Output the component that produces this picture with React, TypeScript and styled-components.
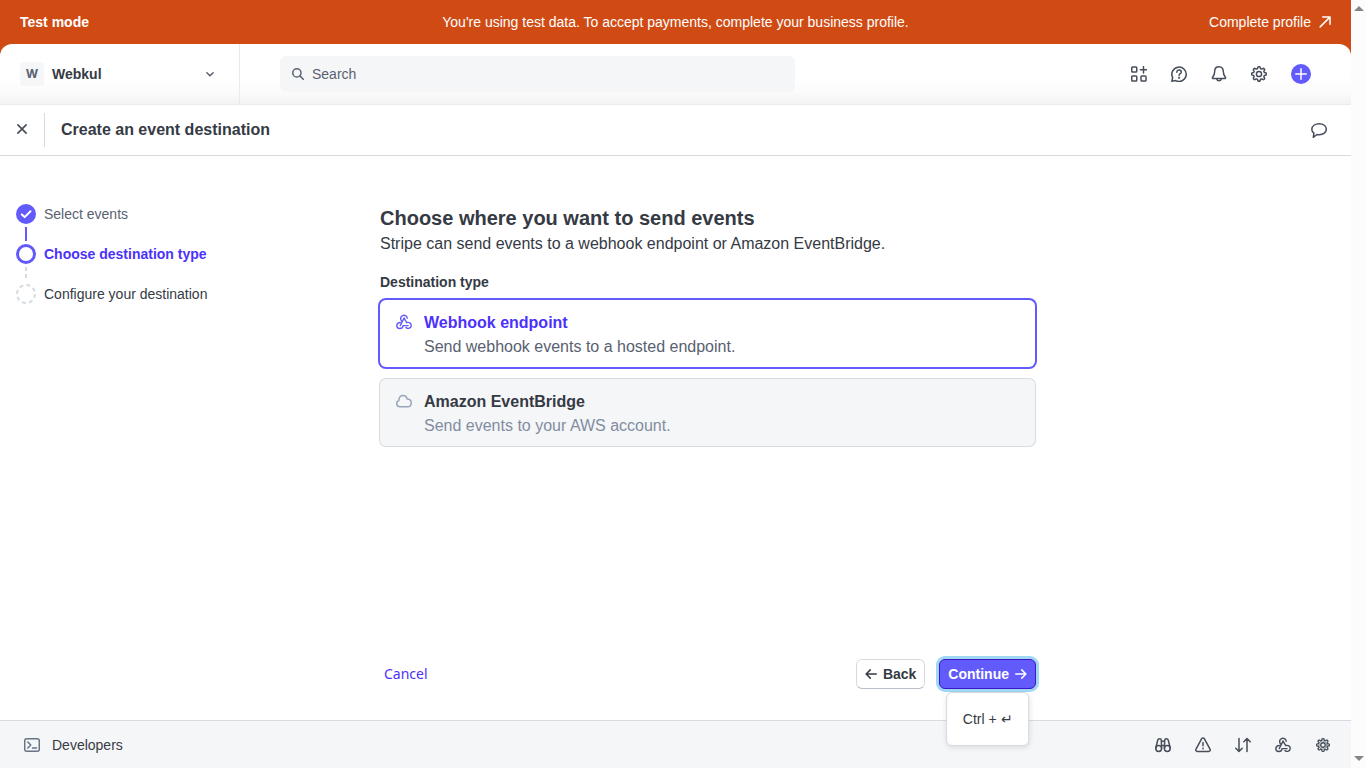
import React, { useState } from "react";
import styled, { createGlobalStyle, css } from "styled-components";

const color = {
  ink: "#353a44",
  icon: "#474e5a",
  muted: "#596171",
  faint: "#818da0",
  brand: "#625afa",
  brandText: "#4b32fa",
  line: "#d5dbe1",
  surface: "#f5f6f8",
  orange: "#d04b14",
};

const GlobalStyle = createGlobalStyle`
  *, *::before, *::after { box-sizing: border-box; }
  body {
    margin: 0;
    background: #fff;
    color: ${color.ink};
    font-family: "Liberation Sans", Arial, sans-serif;
    font-size: 14px;
    line-height: 20px;
  }
  button, input { font: inherit; color: inherit; }
  svg { display: block; flex: none; }
`;

const Frame = styled.div`
  display: grid;
  grid-template-columns: minmax(0, 1fr) 15px;
  min-height: 100vh;
`;

const Page = styled.div`
  display: flex;
  flex-direction: column;
  background: ${color.orange};
`;

const ScrollRail = styled.div`
  display: flex;
  flex-direction: column;
  justify-content: space-between;
  align-items: center;
  padding: 6px 0 7px;
  background: #fcfcfc;
`;

const Banner = styled.div`
  display: grid;
  grid-template-columns: 1fr auto 1fr;
  align-items: center;
  gap: 16px;
  min-height: 44px;
  padding: 0 20px;
  color: #fff;
`;

const ProfileLink = styled.a`
  justify-self: end;
  display: flex;
  align-items: center;
  gap: 8px;
  color: inherit;
  text-decoration: none;
`;

const Header = styled.header`
  display: flex;
  align-items: center;
  height: 60px;
  padding-right: 40px;
  background: linear-gradient(#fff 55%, #fbfbfb 80%, #f3f3f3);
  border-radius: 12px 12px 0 0;
`;

const AccountButton = styled.button`
  display: flex;
  align-items: center;
  gap: 8px;
  width: 240px;
  height: 100%;
  padding: 0 24px 0 20px;
  border: 0;
  border-right: 1px solid #e8ebee;
  background: none;
  font-weight: 700;
  text-align: left;
`;

const AccountName = styled.span`
  flex: 1;
`;

const Avatar = styled.span`
  display: grid;
  place-items: center;
  width: 24px;
  height: 24px;
  border-radius: 4px;
  background: ${color.surface};
  color: ${color.muted};
  font-family: Inter, sans-serif;
  font-size: 12px;
`;

const SearchBox = styled.label`
  display: flex;
  align-items: center;
  gap: 8px;
  flex: 1;
  max-width: 515px;
  height: 36px;
  margin: 0 40px;
  padding: 0 12px;
  border-radius: 6px;
  background: ${color.surface};
  color: ${color.muted};
`;

const SearchInput = styled.input`
  flex: 1;
  min-width: 0;
  padding: 0;
  border: 0;
  outline: 0;
  background: none;
  &::placeholder { color: ${color.muted}; opacity: 1; }
`;

const Tools = styled.div`
  display: flex;
  align-items: center;
  margin-left: auto;
`;

const IconButton = styled.button`
  display: grid;
  place-items: center;
  width: 40px;
  height: 40px;
  padding: 0;
  border: 0;
  background: none;
  color: ${color.icon};
`;

const AddButton = styled.button`
  display: grid;
  place-items: center;
  width: 20px;
  height: 20px;
  margin-left: 12px;
  padding: 0;
  border: 0;
  border-radius: 50%;
  background: ${color.brand};
  color: #fff;
`;

const Sheet = styled.section`
  flex: 1;
  display: flex;
  flex-direction: column;
  background: #fff;
  border-top: 1px solid #ebebec;
`;

const TitleBar = styled.div`
  display: flex;
  align-items: center;
  height: 51px;
  padding: 0 12px 0 0;
  border-bottom: 1px solid ${color.line};
`;

const CloseButton = styled(IconButton)`
  width: 45px;
  height: 34px;
  padding-bottom: 2px;
  border-right: 1px solid ${color.line};
`;

const SheetTitle = styled.h1`
  flex: 1;
  margin: 0 0 0 16px;
  font-size: 16px;
  line-height: 24px;
`;

const Body = styled.div`
  flex: 1;
  display: flex;
`;

const Steps = styled.ol`
  flex: none;
  width: 380px;
  margin: 0;
  padding: 48px 16px;
  list-style: none;
`;

type StepState = "done" | "current" | "todo";

const StepItem = styled.li<{ $state: StepState }>`
  display: flex;
  gap: 8px;
  min-height: 40px;
  color: ${(p) => (p.$state === "done" ? color.muted : p.$state === "current" ? color.brandText : color.ink)};
  font-weight: ${(p) => (p.$state === "current" ? 700 : 400)};
`;

const Marker = styled.span`
  display: flex;
  flex-direction: column;
  align-items: center;
  gap: 3px;
`;

const Main = styled.main`
  flex: 1;
  display: flex;
  flex-direction: column;
  max-width: 656px;
  padding: 48px 0 31px;
`;

const Heading = styled.h2`
  margin: 0;
  font-size: 20px;
  line-height: 28px;
`;

const Lead = styled.p`
  margin: 0 0 16px;
  font-size: 16px;
  line-height: 24px;
`;

const Options = styled.fieldset`
  display: flex;
  flex-direction: column;
  gap: 12px;
  min-width: 0;
  margin: 0;
  padding: 0 1px 0 0;
  border: 0;
`;

const Legend = styled.legend`
  margin-bottom: 8px;
  padding: 0;
  font-weight: 700;
`;

const Option = styled.label<{ $selected: boolean }>`
  display: flex;
  gap: 12px;
  padding: 11px 16px 8px;
  border-radius: 6px;
  font-size: 16px;
  line-height: 24px;
  ${(p) =>
    p.$selected
      ? css`
          color: ${color.muted};
          background: #fff;
          box-shadow: 0 0 0 2px ${color.brand};
        `
      : css`
          color: ${color.faint};
          background: ${color.surface};
          box-shadow: 0 0 0 1px ${color.line};
        `}
`;

const OptionRadio = styled.input`
  position: absolute;
  margin: 0;
  opacity: 0;
`;

const OptionIcon = styled.span<{ $selected: boolean }>`
  padding-top: 3px;
  color: ${(p) => (p.$selected ? color.brand : "#99a5b8")};
`;

const OptionText = styled.span`
  display: flex;
  flex-direction: column;
`;

const OptionTitle = styled.strong<{ $selected: boolean }>`
  color: ${(p) => (p.$selected ? color.brandText : color.ink)};
`;

const Actions = styled.div`
  display: flex;
  align-items: center;
  margin-top: auto;
`;

const CancelButton = styled.button`
  margin-right: auto;
  padding: 4px;
  border: 0;
  background: none;
  color: ${color.brandText};
  font-family: "Noto Sans", sans-serif;
`;

const ActionButton = styled.button<{ $primary?: boolean }>`
  display: flex;
  align-items: center;
  gap: 6px;
  height: 30px;
  padding: 0 8px;
  border-radius: 6px;
  font-weight: 700;
  ${(p) =>
    p.$primary
      ? css`
          border: 1px solid #3a17c4;
          background: ${color.brand};
          color: #fff;
          box-shadow: 0 0 0 3px #a0d7f5;
        `
      : css`
          border: 1px solid ${color.line};
          border-bottom-color: #b9c0cb;
          background: #fff;
        `}
`;

const ContinueGroup = styled.div`
  position: relative;
  margin-left: 14px;
`;

const Tooltip = styled.div`
  position: absolute;
  top: calc(100% + 3px);
  left: 50%;
  z-index: 3;
  padding: 17px 16px;
  border: 1px solid ${color.line};
  border-radius: 6px;
  background: #fff;
  box-shadow: 0 2px 5px rgba(48, 49, 61, 0.12);
  white-space: nowrap;
  line-height: 18px;
  transform: translateX(-50%);
`;

const Footer = styled.footer`
  display: flex;
  align-items: center;
  justify-content: space-between;
  height: 48px;
  padding: 0 8px 0 24px;
  border-top: 1px solid ${color.line};
  background: ${color.surface};
`;

const DevelopersButton = styled.button`
  display: flex;
  align-items: center;
  gap: 12px;
  padding: 0;
  border: 0;
  background: none;
`;

const Icon = ({ children, size = 16, width = 1.5 }: { children: React.ReactNode; size?: number; width?: number }) => (
  <svg
    width={size}
    height={size}
    viewBox="0 0 16 16"
    fill="none"
    stroke="currentColor"
    strokeWidth={width}
    strokeLinecap="round"
    strokeLinejoin="round"
    aria-hidden="true"
  >
    {children}
  </svg>
);

const WebhookIcon = () => (
  <Icon width={1.4}>
    <path d="M5.700 7A3.300 3.300 0 1 1 11.200 4.300" />
    <path d="M8 4.200 4.200 11.600" />
    <path d="M8 4.200l2.800 4.500c2.200-.9 4.400.6 4.400 2.700a3 3 0 0 1-5.200 2" />
    <path d="M4.300 8.500C2.300 8.500.8 9.800.8 11.500c0 3.800 5.700 4.200 6.300.1h5" />
  </Icon>
);

const gearPath = (() => {
  const points: string[] = [];
  for (let i = 0; i < 128; i += 1) {
    const a = (i / 128) * Math.PI * 2;
    const r = 6.4 + 0.9 * Math.tanh(2.5 * Math.cos(8 * a));
    points.push(`${(8 + r * Math.cos(a)).toFixed(2)} ${(8 + r * Math.sin(a)).toFixed(2)}`);
  }
  return `M${points.join("L")}Z`;
})();

const GearIcon = ({ small = false }: { small?: boolean }) => (
  <Icon size={small ? 14 : 16} width={1.5}>
    <path d={gearPath} />
    <circle cx="8" cy="8" r="2.600" />
    {small && <circle cx="8" cy="8" r="4.600" strokeWidth="0.700" />}
  </Icon>
);

const StepMarker = ({ state }: { state: StepState }) => (
  <svg width="20" height="20" viewBox="0 0 20 20" fill="none" aria-hidden="true">
    {state === "done" && (
      <>
        <circle cx="10" cy="10" r="10" fill={color.brand} />
        <path d="M5.800 10.400 8.700 13.100 14.500 7.200" stroke="#fff" strokeWidth="2" strokeLinecap="round" strokeLinejoin="round" />
      </>
    )}
    {state === "current" && <circle cx="10" cy="10" r="8.500" stroke={color.brand} strokeWidth="3" />}
    {state === "todo" && <circle cx="10" cy="10" r="9" stroke={color.line} strokeWidth="2" strokeDasharray="4 3.070" />}
  </svg>
);

const Connector = ({ dashed }: { dashed: boolean }) => (
  <svg width="2" height="14" viewBox="0 0 2 14" aria-hidden="true">
    <path
      d={dashed ? "M1 0V4M1 7V11" : "M1 0V14"}
      stroke={dashed ? color.line : color.brand}
      strokeWidth="2"
    />
  </svg>
);

const steps: { label: string; state: StepState }[] = [
  { label: "Select events", state: "done" },
  { label: "Choose destination type", state: "current" },
  { label: "Configure your destination", state: "todo" },
];

const options = [
  {
    id: "webhook",
    title: "Webhook endpoint",
    text: "Send webhook events to a hosted endpoint.",
    icon: <WebhookIcon />,
  },
  {
    id: "eventbridge",
    title: "Amazon EventBridge",
    text: "Send events to your AWS account.",
    icon: (
      <Icon>
        <path d="M3.900 13.800a3.200 3.200 0 0 1-1.100-6.200C3 4.500 4.500 2.500 6.900 2.500c2.200 0 3.800 1.300 4.300 3.500 2.400 0 4 1.600 4 3.900 0 2.300-1.500 3.900-3.700 3.900Z" />
      </Icon>
    ),
  },
];

export default function App() {
  const [selected, setSelected] = useState("webhook");

  return (
    <>
      <GlobalStyle />
      <Frame>
        <Page>
          <Banner>
            <strong>Test mode</strong>
            <span>You're using test data. To accept payments, complete your business profile.</span>
            <ProfileLink href="#profile">
              Complete profile
              <Icon size={12} width={2}>
                <path d="M1.500 14.500 14.500 1.500M5 1.300h9.700V11" />
              </Icon>
            </ProfileLink>
          </Banner>

          <Header>
            <AccountButton type="button">
              <Avatar>W</Avatar>
              <AccountName>Webkul</AccountName>
              <Icon size={10} width={2.500}>
                <path d="M3 6 8 10.800 13 6" stroke={color.muted} />
              </Icon>
            </AccountButton>
            <SearchBox>
              <Icon size={12} width={2}>
                <circle cx="6.500" cy="6.500" r="5.500" />
                <path d="M10.500 10.500 15 15" />
              </Icon>
              <SearchInput type="search" placeholder="Search" aria-label="Search" />
            </SearchBox>
            <Tools>
              <IconButton type="button" aria-label="Apps">
                <Icon>
                  <rect x=".75" y="1" width="5" height="5" rx=".8" />
                  <rect x=".75" y="10" width="5" height="5" rx=".8" />
                  <rect x="10" y="10" width="5" height="5" rx=".8" />
                  <path d="M12.500.7v6.300M9.300 3.800h6.300" />
                </Icon>
              </IconButton>
              <IconButton type="button" aria-label="Help">
                <Icon>
                  <path d="M.8 15.200l.9-3.500A7.200 7.200 0 1 1 4.600 14.600Z" />
                  <path d="M5.800 6.200c0-3 4.500-2.800 4.500 0 0 1.500-2.200 1.500-2.200 3" />
                  <circle cx="8.100" cy="11.700" r=".4" />
                </Icon>
              </IconButton>
              <IconButton type="button" aria-label="Notifications">
                <Icon>
                  <path d="M8 .8c-2.700 0-4.300 2-4.300 4.400 0 3.500-.9 4.500-2 5.800-.6.8-.2 1.600.7 1.600h11.200c.9 0 1.300-.8.7-1.600-1.100-1.300-2-2.300-2-5.800C12.300 2.800 10.700.8 8 .8Z" />
                  <path d="M5.800 13.200a2.300 2.300 0 0 0 4.400 0" />
                </Icon>
              </IconButton>
              <IconButton type="button" aria-label="Settings">
                <GearIcon />
              </IconButton>
              <AddButton type="button" aria-label="Create">
                <Icon size={12} width={2}>
                  <path d="M8 1v14M1 8h14" />
                </Icon>
              </AddButton>
            </Tools>
          </Header>

          <Sheet>
            <TitleBar>
              <CloseButton type="button" aria-label="Close">
                <Icon size={12} width={2.200}>
                  <path d="M2.500 2.500l11 11M13.500 2.500l-11 11" />
                </Icon>
              </CloseButton>
              <SheetTitle>Create an event destination</SheetTitle>
              <IconButton type="button" aria-label="Feedback">
                <Icon>
                  <path d="M8.300 1.700c4 0 7 2.300 7 5.500s-3 5.600-7 5.600c-.8 0-1.600-.1-2.300-.3L2.300 15.400l.6-4.300C1.500 10.100.8 8.700.8 7.200c0-3.200 3.300-5.500 7.500-5.500Z" />
                </Icon>
              </IconButton>
            </TitleBar>

            <Body>
              <Steps>
                {steps.map((step, i) => (
                  <StepItem key={step.label} $state={step.state} aria-current={step.state === "current" ? "step" : undefined}>
                    <Marker>
                      <StepMarker state={step.state} />
                      {i < steps.length - 1 && <Connector dashed={step.state !== "done"} />}
                    </Marker>
                    {step.label}
                  </StepItem>
                ))}
              </Steps>

              <Main>
                <Heading>Choose where you want to send events</Heading>
                <Lead>Stripe can send events to a webhook endpoint or Amazon EventBridge.</Lead>
                <Options>
                  <Legend>Destination type</Legend>
                  {options.map((option) => {
                    const isSelected = option.id === selected;
                    return (
                      <Option key={option.id} $selected={isSelected}>
                        <OptionRadio
                          type="radio"
                          name="destination"
                          checked={isSelected}
                          onChange={() => setSelected(option.id)}
                        />
                        <OptionIcon $selected={isSelected}>{option.icon}</OptionIcon>
                        <OptionText>
                          <OptionTitle $selected={isSelected}>{option.title}</OptionTitle>
                          <span>{option.text}</span>
                        </OptionText>
                      </Option>
                    );
                  })}
                </Options>

                <Actions>
                  <CancelButton type="button">Cancel</CancelButton>
                  <ActionButton type="button">
                    <Icon size={12} width={2}>
                      <path d="M15 8H1.500M7 2.500 1.500 8 7 13.500" />
                    </Icon>
                    Back
                  </ActionButton>
                  <ContinueGroup>
                    <ActionButton type="submit" $primary>
                      Continue
                      <Icon size={12} width={2}>
                        <path d="M1 8h13.500M9 2.500 14.500 8 9 13.500" />
                      </Icon>
                    </ActionButton>
                    <Tooltip role="tooltip">Ctrl + ↵</Tooltip>
                  </ContinueGroup>
                </Actions>
              </Main>
            </Body>
          </Sheet>

          <Footer>
            <DevelopersButton type="button">
              <Icon>
                <rect x=".7" y="1.700" width="14.600" height="12.600" rx="2" stroke="#687385" />
                <path d="M3.800 5l3 3-3 3M8.500 11h4" stroke="#687385" />
              </Icon>
              Developers
            </DevelopersButton>
            <Tools>
              <IconButton type="button" aria-label="Inspector">
                <Icon>
                  <circle cx="3.700" cy="11.500" r="2.900" />
                  <circle cx="12.300" cy="11.500" r="2.900" />
                  <path d="M.8 11 2.700 3.200C3.200 1.300 6.200 1.300 6.300 3.200l.3 8M15.200 11 13.300 3.200C12.800 1.300 9.800 1.300 9.700 3.200l-.3 8M6.300 4.300h3.400M6.600 8.500h2.800" />
                </Icon>
              </IconButton>
              <IconButton type="button" aria-label="Errors">
                <Icon>
                  <path d="M6.700 1.700a1.500 1.500 0 0 1 2.600 0l5.700 10.500a1.500 1.500 0 0 1-1.300 2.300H2.300A1.500 1.500 0 0 1 1 12.200ZM8 5.500v3.300" />
                  <circle cx="8" cy="11.500" r=".3" />
                </Icon>
              </IconButton>
              <IconButton type="button" aria-label="API requests">
                <Icon>
                  <path d="M4 1.500v13M.8 11.300 4 14.500l3.200-3.200M12 14.500v-13M8.800 4.700 12 1.500l3.200 3.200" />
                </Icon>
              </IconButton>
              <IconButton type="button" aria-label="Webhooks">
                <WebhookIcon />
              </IconButton>
              <IconButton type="button" aria-label="Developer settings">
                <GearIcon small />
              </IconButton>
            </Tools>
          </Footer>
        </Page>
        <ScrollRail aria-hidden="true">
          <svg width="10" height="5" viewBox="0 0 10 5">
            <path d="M5 0 10 5H0Z" fill="#858585" />
          </svg>
          <svg width="10" height="5" viewBox="0 0 10 5">
            <path d="M5 5 10 0H0Z" fill="#858585" />
          </svg>
        </ScrollRail>
      </Frame>
    </>
  );
}
